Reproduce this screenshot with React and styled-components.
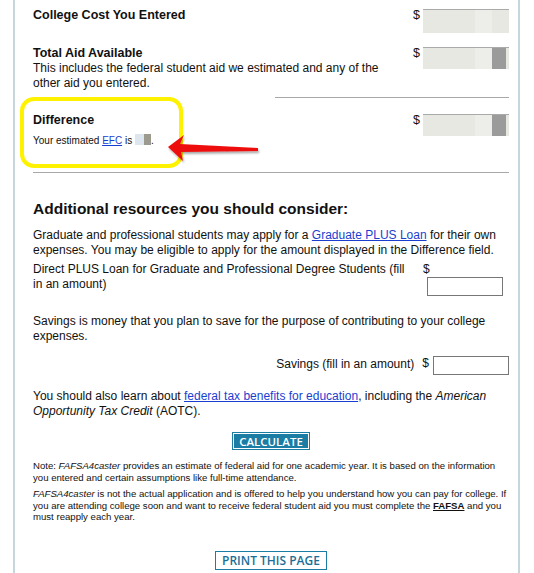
import React from 'react';
import styled, { createGlobalStyle } from 'styled-components';

const Global = createGlobalStyle`
  body { margin: 0; background: #fff; font-family: "Liberation Sans", Arial, sans-serif; color: #111; }
`;

const Panel = styled.div`
  position: relative;
  margin: 0 14px 0 13px;
  border-left: 2px solid #c5d6dc;
  border-right: 2px solid #c5d6dc;
  padding: 8px 9px 11px 18px;
  height: 554px;
`;

const Row = styled.div`
  display: flex;
  justify-content: space-between;
  align-items: flex-start;
`;

const Label = styled.div`
  font-size: 12px;
  line-height: 15px;
  width: 370px;
  b { font-weight: bold; font-size: 12.5px; }
`;

const Amount = styled.div`
  display: flex;
  font-size: 12.5px;
  gap: 3px;
`;

const Box = styled.div`
  width: 86px;
  height: ${p => p.h || 22}px;
  margin-top: 1px;
  background: linear-gradient(90deg, #e8e8e3 0 60%, #edeee9 60% 80%, ${p => (p.dark ? '#9b9b9b' : '#e8e8e3')} 80% 96%, #e8e8e3 96%);
  border-top: 1px solid #aaa;
`;

const Rule = styled.hr`
  border: 0;
  border-top: 1px solid #a8a8a8;
  margin: ${p => p.m};
  margin-left: ${p => p.left || 0}px;
`;

const Small = styled.div`
  font-size: 10px;
  margin-top: 6px;
  a { color: #1a3fd0; }
`;

const Swatch = styled.span`
  display: inline-block;
  width: 16px;
  height: 11px;
  vertical-align: -1px;
  background: linear-gradient(90deg, #dde6ee 0 55%, #9c9a8e 55%);
`;

const Highlight = styled.div`
  position: absolute;
  left: 5px;
  top: 97px;
  width: 155px;
  height: 63px;
  border: 4px solid #fff200;
  border-radius: 14px;
`;

const Arrow = styled.svg`
  position: absolute;
  left: 135px;
  top: 131px;
`;

const Heading = styled.h2`
  font-size: 15.5px;
  font-weight: bold;
  margin: 27px 0 10px;
`;

const Para = styled.p`
  font-size: 12px;
  line-height: 15px;
  margin: ${p => p.m || '0'};
  a { color: #1a3fd0; }
`;

const Field = styled.div`
  display: flex;
  justify-content: ${p => (p.right ? 'flex-end' : 'space-between')};
  align-items: flex-start;
  gap: 8px;
  font-size: 12px;
  line-height: 15px;
  margin: ${p => p.m || '0'};
`;

const Input = styled.span`
  display: inline-block;
  width: 74px;
  height: 17px;
  border: 1px solid #777;
  margin-left: 4px;
  vertical-align: top;
`;

const Center = styled.div`
  display: flex;
  justify-content: center;
  margin: ${p => p.m};
`;

const Button = styled.button`
  font-family: "Open Sans", "Liberation Sans", sans-serif;
  font-size: ${p => (p.big ? 12 : 11.5)}px;
  font-weight: 600;
  padding: 0 6px;
  height: ${p => (p.big ? 19 : 18)}px;
  border: 1px solid #1b7ca4;
  color: ${p => (p.filled ? '#fff' : '#1b6f97')};
  background: ${p => (p.filled ? '#1b7ca4' : '#fff')};
  box-shadow: ${p => (p.filled ? 'inset 0 0 0 1px #fff' : 'none')};
`;

const Note = styled.p`
  font-size: 9.6px;
  line-height: 11.5px;
  margin: ${p => p.m || '0'};
  a { color: #111; font-weight: bold; }
`;

export default function App() {
  return (
    <>
      <Global />
      <Panel>
        <Row>
          <Label><b>College Cost You Entered</b></Label>
          <Amount>$<Box h={23} /></Amount>
        </Row>
        <Row style={{ marginTop: 13 }}>
          <Label>
            <b>Total Aid Available</b><br />
            This includes the federal student aid we estimated and any of the other aid you entered.
          </Label>
          <Amount>$<Box h={21} dark /></Amount>
        </Row>
        <Rule m="6px 0 0" left={242} />
        <Row style={{ marginTop: 15 }}>
          <div>
            <Label><b>Difference</b></Label>
            <Small>Your estimated <a href="#">EFC</a> is <Swatch />.</Small>
          </div>
          <Amount>$<Box h={21} dark /></Amount>
        </Row>
        <Rule m="26px 0 0" />
        <Highlight />
        <Arrow width="112" height="34" viewBox="0 0 112 34">
          <defs>
            <filter id="s" x="-10%" y="-30%" width="130%" height="170%">
              <feDropShadow dx="1" dy="2" stdDeviation="1.2" floodOpacity="0.35" />
            </filter>
          </defs>
          <path d="M18 16 L34 4 L30 13 L108 17 L108 20 L31 21 L33 30 Z" fill="#ee1111" filter="url(#s)" />
        </Arrow>

        <Heading>Additional resources you should consider:</Heading>
        <Para>
          Graduate and professional students may apply for a <a href="#">Graduate PLUS Loan</a> for their own expenses. You may be eligible to apply for the amount displayed in the Difference field.
        </Para>
        <Field m="4px 0 0">
          <span style={{ width: 385 }}>Direct PLUS Loan for Graduate and Professional Degree Students (fill in an amount)</span>
          <span>$<Input /></span>
        </Field>
        <Para m="18px 0 0">
          Savings is money that you plan to save for the purpose of contributing to your college expenses.
        </Para>
        <Field right m="12px 0 0">
          <span style={{ marginTop: 1 }}>Savings (fill in an amount)</span>
          <span>$<Input /></span>
        </Field>
        <Para m="14px 0 0">
          You should also learn about <a href="#">federal tax benefits for education</a>, including the <i>American Opportunity Tax Credit</i> (AOTC).
        </Para>
        <Center m="13px 0 0">
          <Button filled>CALCULATE</Button>
        </Center>
        <Note m="10px 0 0">
          Note: <i>FAFSA4caster</i> provides an estimate of federal aid for one academic year. It is based on the information you entered and certain assumptions like full-time attendance.
        </Note>
        <Note m="5px 0 0">
          <i>FAFSA4caster</i> is not the actual application and is offered to help you understand how you can pay for college. If you are attending college soon and want to receive federal student aid you must complete the <a href="#">FAFSA</a> and you must reapply each year.
        </Note>
        <Center m="28px 0 0">
          <Button big>PRINT THIS PAGE</Button>
        </Center>
      </Panel>
    </>
  );
}
